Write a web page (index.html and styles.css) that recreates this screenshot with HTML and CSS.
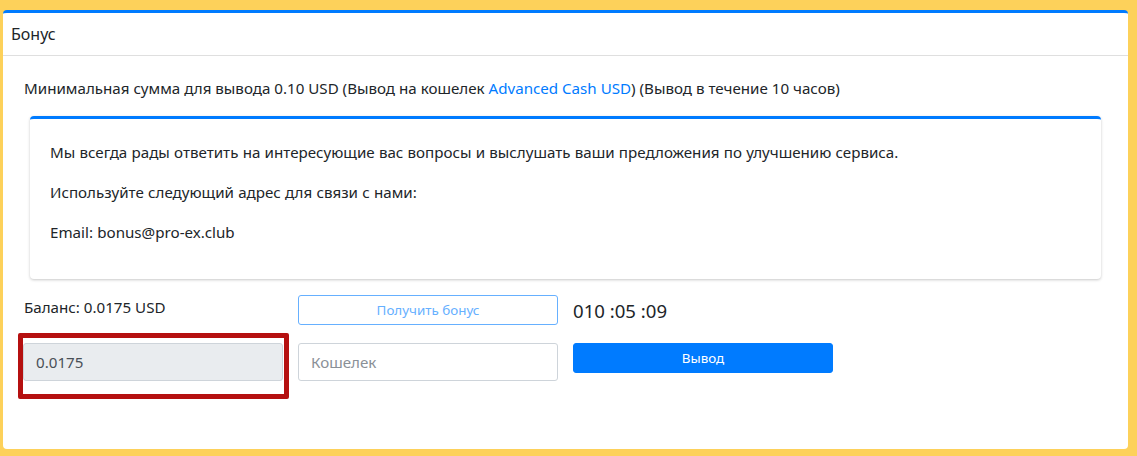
FILE: index.html
```html
<!DOCTYPE html>
<html lang="ru">
<head>
<meta charset="utf-8">
<title>Бонус</title>
<link rel="stylesheet" href="styles.css">
</head>
<body>
<div class="card">
  <div class="card-header">Бонус</div>
  <div class="card-body">
    <p class="info">Минимальная сумма для вывода 0.10 USD (Вывод на кошелек <a href="#" class="link">Advanced Cash USD</a>) (Вывод в течение 10 часов)</p>
    <div class="notice">
      <p>Мы всегда рады ответить на интересующие вас вопросы и выслушать ваши предложения по улучшению сервиса.</p>
      <p>Используйте следующий адрес для связи с нами:</p>
      <p>Email: bonus@pro-ex.club</p>
    </div>
    <div class="controls">
      <div class="balance">Баланс: 0.0175 USD</div>
      <button class="btn btn-outline" disabled>Получить бонус</button>
      <div class="timer">010 :05 :09</div>
      <div class="amount-cell">
        <input class="field field-readonly" type="text" value="0.0175" readonly>
        <span class="highlight"></span>
      </div>
      <input class="field" type="text" placeholder="Кошелек">
      <button class="btn btn-primary">Вывод</button>
    </div>
  </div>
</div>
</body>
</html>
```

FILE: styles.css
```css
* { box-sizing: border-box; }
html, body { height: 100%; }
body {
  margin: 0;
  padding: 10px 9px 7px 3px;
  background: #fdd15a;
  font-family: "Noto Sans", "Open Sans", sans-serif;
  font-size: 15.15px;
  line-height: 24px;
  color: #212529;
}
.card {
  background: #fff;
  border-top: 3px solid #007bff;
  border-radius: 4px;
  height: 439px;
  display: flex;
  flex-direction: column;
}
.card-header {
  padding: 9px 8px;
  font-size: 16px;
  border-bottom: 1px solid #dfdfdf;
}
.card-body {
  padding: 20px 21px 20px 21px;
}
.info { margin: 0 0 16px; }
.link { color: #007bff; text-decoration: none; }
.notice {
  margin: 0 6px;
  border-top: 3px solid #007bff;
  border-radius: 4px;
  box-shadow: 0 1px 3px rgba(0,0,0,0.22);
  padding: 21px 20px 19px 20px;
}
.notice p { margin: 0 0 16px; word-spacing: 0.3px; }
.notice p:last-child { margin-bottom: 16px; }
.controls {
  margin: 16px 0 0 -1px;
  display: grid;
  grid-template-columns: 260px 260px 260px;
  column-gap: 15px;
  row-gap: 16px;
  align-items: start;
}
.balance { padding-left: 1px; }
.btn {
  height: 30px;
  border-radius: 3px;
  font-family: inherit;
  font-size: 13.4px;
  cursor: pointer;
}
.btn-outline {
  background: #fff;
  border: 1px solid #66b0ff;
  color: #66b0ff;
}
.btn-primary {
  background: #007bff;
  border: 1px solid #007bff;
  color: #fff;
}
.timer {
  font-size: 18.6px;
  line-height: 32px;
}
.amount-cell { position: relative; }
.field {
  display: block;
  width: 100%;
  height: 38px;
  padding: 6px 12px;
  border: 1px solid #ced4da;
  border-radius: 3px;
  font-family: inherit;
  font-size: 15.15px;
  color: #495057;
  background: #fff;
}
.field::placeholder { color: #8a9097; }
.field-readonly { background: #e9ecef; }
.highlight {
  position: absolute;
  left: -5px;
  top: -10px;
  width: 271px;
  height: 66px;
  border: 5px solid #b51010;
  border-radius: 2px;
  pointer-events: none;
}
```
